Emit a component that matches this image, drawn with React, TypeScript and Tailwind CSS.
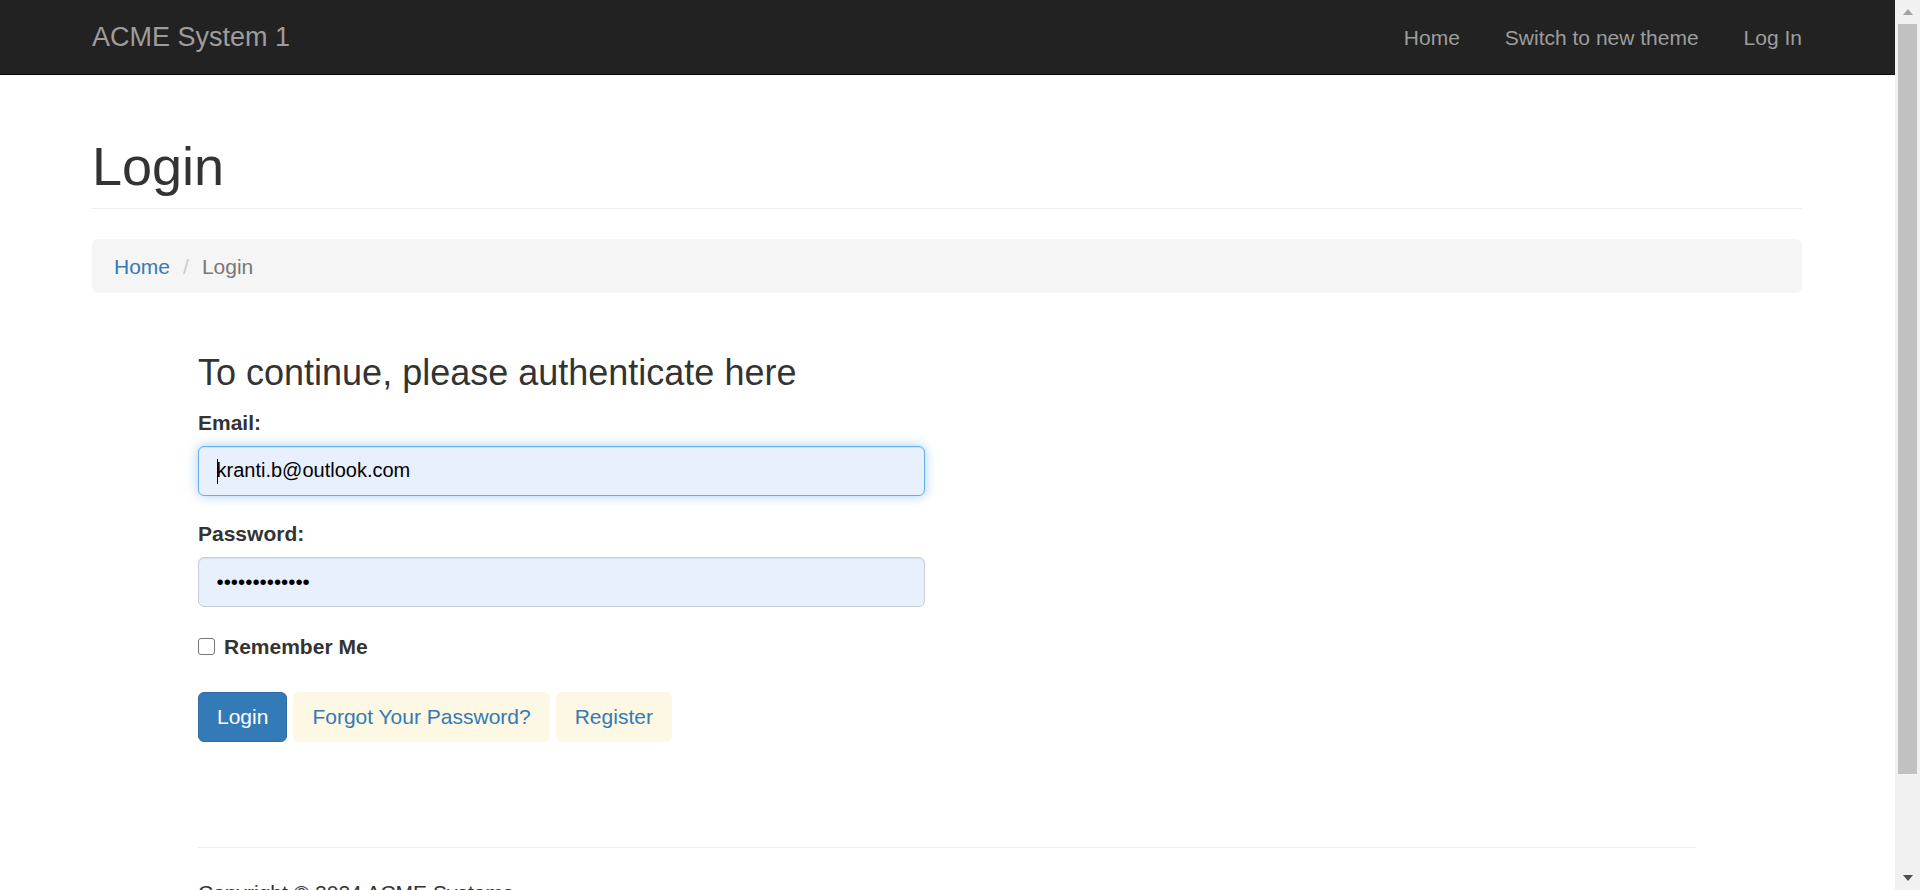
import React from 'react';

const font = "font-['Liberation_Sans',Arial,Helvetica,sans-serif]";

const NavBar: React.FC = () => (
  <div className="h-[75px] shrink-0 bg-[#222222] border-b border-[#080808] flex items-center justify-between pl-[92px] pr-[93px]">
    <span className="text-[27px] text-[#9d9d9d] leading-[30px]">ACME System 1</span>
    <nav className="flex items-center gap-[45px] text-[21px] text-[#9d9d9d] leading-[29px]">
      <span>Home</span>
      <span>Switch to new theme</span>
      <span>Log In</span>
    </nav>
  </div>
);

// drawn scrollbar, the page is clipped to the window
const ScrollBar: React.FC = () => (
  <div className="w-[25px] shrink-0 bg-[#f1f1f1] flex flex-col">
    <div className="h-[24px] flex items-center justify-center">
      <svg width="10" height="6" viewBox="0 0 10 6">
        <polygon points="5,0 10,6 0,6" fill="#a3a3a3" />
      </svg>
    </div>
    <div className="h-[750px] ml-[3px] mr-[3px] bg-[#c1c1c1]" />
    <div className="flex-1" />
    <div className="h-[24px] flex items-center justify-center">
      <svg width="10" height="6" viewBox="0 0 10 6">
        <polygon points="0,0 10,0 5,6" fill="#505050" />
      </svg>
    </div>
  </div>
);

const LoginForm: React.FC = () => (
  <div className="ml-[106px] w-[727px] mt-[60px]">
    <h3 className="text-[36px] leading-[39px] text-[#333333]">To continue, please authenticate here</h3>

    <label className="block mt-[16px] mb-[8.5px] text-[21px] leading-[29px] font-bold text-[#333333]">Email:</label>
    <div className="relative">
      <input
        type="email"
        readOnly
        value="kranti.b@outlook.com"
        className="block w-full h-[50px] px-[17.5px] rounded-[6px] border border-[#66afe9] bg-[#e8f0fe] text-[20px] text-black outline-none shadow-[inset_0_1px_1px_rgba(0,0,0,0.075),0_0_12px_rgba(102,175,233,0.6)]"
      />
      <span className="absolute left-[19px] top-[13px] h-[25px] w-px bg-black" />
    </div>

    <label className="block mt-[23.5px] mb-[8.5px] text-[21px] leading-[29px] font-bold text-[#333333]">Password:</label>
    <input
      type="password"
      readOnly
      value="abcdefghijklm"
      className="block w-full h-[50px] px-[17.5px] rounded-[6px] border border-[#c9ced6] bg-[#e8f0fe] text-[20.5px] text-black outline-none shadow-[inset_0_1px_1px_rgba(0,0,0,0.075)]"
    />

    <div className="mt-[25.5px] flex items-center gap-[9px] text-[21px] leading-[29px] font-bold text-[#333333]">
      <span className="w-[17px] h-[17px] rounded-[3px] border border-[#767676] bg-white" />
      <span>Remember Me</span>
    </div>

    <div className="mt-[30.5px] flex items-center gap-[6px] text-[21px] leading-[29px]">
      <button type="button" className="px-[18px] py-[9.5px] rounded-[6px] border border-[#2e6da4] bg-[#337ab7] text-white">Login</button>
      <button type="button" className="px-[18px] py-[9.5px] rounded-[6px] border border-transparent bg-[#fcf8e3] text-[#337ab7]">Forgot Your Password?</button>
      <button type="button" className="px-[18px] py-[9.5px] rounded-[6px] border border-transparent bg-[#fcf8e3] text-[#337ab7]">Register</button>
    </div>
  </div>
);

export default function App() {
  return (
    <div className={`${font} flex h-[890px] overflow-hidden bg-white`}>
      <div className="w-[1895px] shrink-0 flex flex-col">
        <NavBar />
        <div className="pl-[92px] pr-[93px]">
          <div className="mt-[63px] pb-[13px] border-b border-[#eeeeee]">
            <h1 className="text-[54px] leading-[57px] text-[#333333]">Login</h1>
          </div>
          <div className="mt-[30px] h-[54px] px-[22px] rounded-[6px] bg-[#f5f5f5] flex items-center text-[21px] leading-[29px]">
            <span className="text-[#337ab7]">Home</span>
            <span className="text-[#cccccc] pl-[13px] pr-[13px]">/</span>
            <span className="text-[#777777]">Login</span>
          </div>
          <LoginForm />
          <footer className="ml-[106px] w-[1498px] mt-[105px] border-t border-[#eeeeee] pt-[30px] text-[21px] leading-[29px] text-[#333333]">
            Copyright © 2024 ACME Systems
          </footer>
        </div>
      </div>
      <ScrollBar />
    </div>
  );
}
